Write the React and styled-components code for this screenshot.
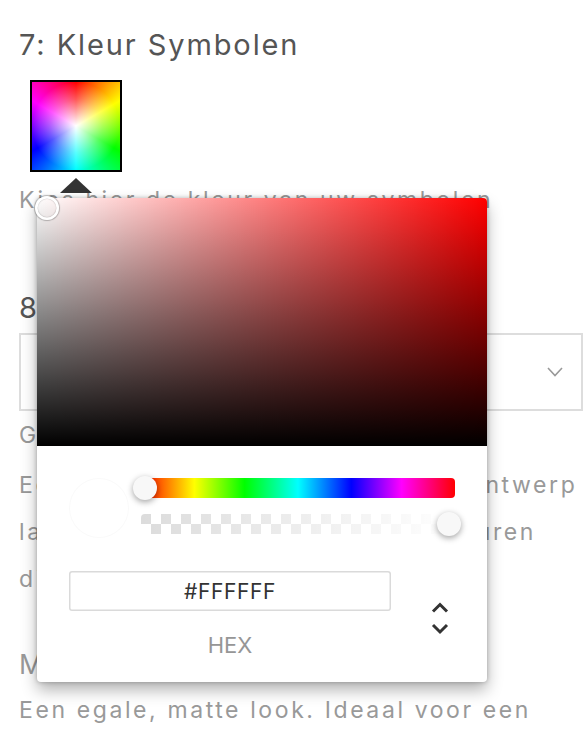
import styled, { createGlobalStyle } from "styled-components";

const GlobalStyle = createGlobalStyle`
  body {
    margin: 0;
    background: #fff;
    font-family: Inter, "Liberation Sans", sans-serif;
  }
`;

const Page = styled.div`
  padding: 27px 5px 0 19px;
`;

const Heading = styled.h2`
  margin: ${(p) => p.$mt || 0}px 0 0;
  font-size: 29px;
  line-height: 36px;
  font-weight: 400;
  letter-spacing: 1.9px;
  color: #555;
  white-space: nowrap;
`;

const Text = styled.div`
  margin-top: ${(p) => p.$mt || 0}px;
  font-size: ${(p) => p.$size || 23}px;
  line-height: ${(p) => p.$lh || 47}px;
  letter-spacing: 2.6px;
  color: #999;
  white-space: nowrap;
`;

const SwatchWrap = styled.div`
  position: relative;
  width: 92px;
  height: 92px;
  margin: 17px 0 0 11px;
`;

const Swatch = styled.div`
  width: 92px;
  height: 92px;
  box-sizing: border-box;
  border: 2px solid #000;
  background: radial-gradient(
      circle closest-side,
      rgba(255, 255, 255, 1),
      rgba(255, 255, 255, 0.35) 60%,
      rgba(255, 255, 255, 0) 100%
    ),
    conic-gradient(#f00, #ff0, #0f0, #0ff, #00f, #f0f, #f00);
`;

const Arrow = styled.div`
  position: absolute;
  top: 98px;
  left: 30px;
  width: 0;
  height: 0;
  border-left: 16px solid transparent;
  border-right: 16px solid transparent;
  border-bottom: 15px solid #333;
`;

const Picker = styled.div`
  position: absolute;
  top: 118px;
  left: 7px;
  z-index: 10;
  width: 450px;
  background: #fff;
  border-radius: 4px;
  box-shadow: 0 0 4px rgba(0, 0, 0, 0.25), 0 8px 16px rgba(0, 0, 0, 0.3);
`;

const Saturation = styled.div`
  position: relative;
  height: 248px;
  border-radius: 4px 4px 0 0;
  background: linear-gradient(to top, #000, rgba(0, 0, 0, 0)),
    linear-gradient(to right, #fff, rgba(255, 255, 255, 0)), #f00;
`;

const SatPointer = styled.div`
  position: absolute;
  top: -2px;
  left: -2px;
  width: 24px;
  height: 24px;
  border-radius: 50%;
  box-shadow: inset 0 0 0 2.5px #fff, 0 0 1px 1px rgba(0, 0, 0, 0.25),
    inset 0 0 1px 3px rgba(0, 0, 0, 0.15);
`;

const Body = styled.div`
  padding: 32px 32px 24px;
`;

const Controls = styled.div`
  display: flex;
  align-items: flex-start;
`;

const DotWrap = styled.div`
  width: 72px;
  flex: none;
`;

const Dot = styled.div`
  width: 60px;
  height: 60px;
  border-radius: 50%;
  background: #fff;
  box-shadow: inset 0 0 0 1px rgba(0, 0, 0, 0.025);
`;

const Sliders = styled.div`
  flex: 1;
  display: flex;
  flex-direction: column;
  gap: 16px;
`;

const Track = styled.div`
  position: relative;
  height: 20px;
  border-radius: 4px;
  background: ${(p) =>
    p.$kind === "hue"
      ? "linear-gradient(to right, #f00 0%, #ff0 17%, #0f0 33%, #0ff 50%, #00f 67%, #f0f 83%, #f00 100%)"
      : "linear-gradient(to right, rgba(255,255,255,0), #fff), conic-gradient(#fff 0 25%, #dcdcdc 0 50%, #fff 0 75%, #dcdcdc 0) 0 0 / 20px 20px"};
`;

const Thumb = styled.div`
  position: absolute;
  top: -2px;
  left: ${(p) => p.$left}px;
  width: 24px;
  height: 24px;
  border-radius: 50%;
  background: #f8f8f8;
  box-shadow: 0 2px 6px rgba(0, 0, 0, 0.37);
`;

const Fields = styled.div`
  display: flex;
  margin-top: 33px;
`;

const FieldCol = styled.div`
  width: 322px;
  display: flex;
  flex-direction: column;
  align-items: center;
`;

const HexInput = styled.div`
  width: 100%;
  height: 40px;
  box-sizing: border-box;
  border-radius: 3px;
  box-shadow: inset 0 0 0 1.5px #dadada;
  display: flex;
  align-items: center;
  justify-content: center;
  font-size: 21px;
  letter-spacing: 0.6px;
  color: #333;
`;

const Label = styled.div`
  margin-top: 21px;
  font-size: 22px;
  line-height: 26px;
  color: #969696;
`;

const Toggle = styled.div`
  flex: 1;
  display: flex;
  justify-content: flex-end;
  padding: 31px 6px 0 0;
`;

const Select = styled.div`
  margin-top: 7px;
  height: 78px;
  box-sizing: border-box;
  border: 2px solid #ddd;
  display: flex;
  align-items: center;
  justify-content: flex-end;
  padding-right: 18px;
`;

export default function App() {
  return (
    <>
      <GlobalStyle />
      <Page>
        <Heading>7: Kleur Symbolen</Heading>
        <SwatchWrap>
          <Swatch />
          <Arrow />
          <Picker>
            <Saturation>
              <SatPointer />
            </Saturation>
            <Body>
              <Controls>
                <DotWrap>
                  <Dot />
                </DotWrap>
                <Sliders>
                  <Track $kind="hue">
                    <Thumb $left={-8} />
                  </Track>
                  <Track $kind="alpha">
                    <Thumb $left={296} />
                  </Track>
                </Sliders>
              </Controls>
              <Fields>
                <FieldCol>
                  <HexInput>#FFFFFF</HexInput>
                  <Label>HEX</Label>
                </FieldCol>
                <Toggle>
                  <svg width="18" height="33" viewBox="0 0 18 33" fill="none" stroke="#333" strokeWidth="3">
                    <polyline points="2,9.5 9,2.5 16,9.5" />
                    <polyline points="2,23 9,30 16,23" />
                  </svg>
                </Toggle>
              </Fields>
            </Body>
          </Picker>
        </SwatchWrap>
        <Text $mt={5}>Kies hier de kleur van uw symbolen</Text>
        <Heading $mt={66}>8: Afwerking</Heading>
        <Select>
          <svg width="16" height="10" viewBox="0 0 16 10" fill="none" stroke="#999" strokeWidth="1.6">
            <polyline points="1,1 8,8.5 15,1" />
          </svg>
        </Select>
        <Text $mt={1}>Glanzend</Text>
        <Text $mt={3}>Een glanzende afwerking, die uw ontwerp</Text>
        <Text>laat stralen met heldere, diepe kleuren</Text>
        <Text>die lang mooi blijven.</Text>
        <Text $mt={39} $size={27} $lh={45}>Mat</Text>
        <Text>Een egale, matte look. Ideaal voor een</Text>
      </Page>
    </>
  );
}
